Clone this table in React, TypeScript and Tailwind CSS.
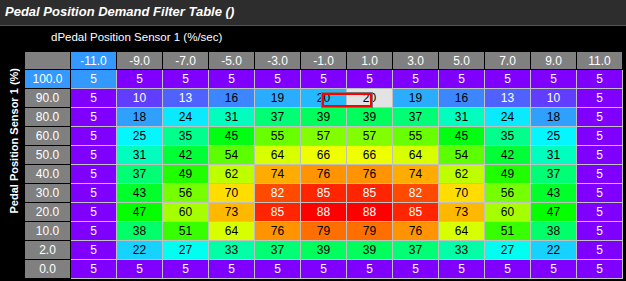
const cols = ["-11.0", "-9.0", "-7.0", "-5.0", "-3.0", "-1.0", "1.0", "3.0", "5.0", "7.0", "9.0", "11.0"];

const rows: { label: string; values: number[] }[] = [
  { label: "100.0", values: [5, 5, 5, 5, 5, 5, 5, 5, 5, 5, 5, 5] },
  { label: "90.0", values: [5, 10, 13, 16, 19, 20, 20, 19, 16, 13, 10, 5] },
  { label: "80.0", values: [5, 18, 24, 31, 37, 39, 39, 37, 31, 24, 18, 5] },
  { label: "60.0", values: [5, 25, 35, 45, 55, 57, 57, 55, 45, 35, 25, 5] },
  { label: "50.0", values: [5, 31, 42, 54, 64, 66, 66, 64, 54, 42, 31, 5] },
  { label: "40.0", values: [5, 37, 49, 62, 74, 76, 76, 74, 62, 49, 37, 5] },
  { label: "30.0", values: [5, 43, 56, 70, 82, 85, 85, 82, 70, 56, 43, 5] },
  { label: "20.0", values: [5, 47, 60, 73, 85, 88, 88, 85, 73, 60, 47, 5] },
  { label: "10.0", values: [5, 38, 51, 64, 76, 79, 79, 76, 64, 51, 38, 5] },
  { label: "2.0", values: [5, 22, 27, 33, 37, 39, 39, 37, 33, 27, 22, 5] },
  { label: "0.0", values: [5, 5, 5, 5, 5, 5, 5, 5, 5, 5, 5, 5] },
];

const MIN = 5;
const MAX = 88;

// purple -> cyan -> green -> yellow -> red
const stops = [
  [128, 0, 255],
  [0, 255, 255],
  [0, 255, 0],
  [255, 255, 0],
  [255, 0, 0],
];

const heat = (v: number) => {
  const t = (v - MIN) / (MAX - MIN);
  const seg = Math.min(3, Math.floor(t * 4));
  const f = t * 4 - seg;
  const a = stops[seg];
  const b = stops[seg + 1];
  const c = a.map((x, i) => Math.round(x + (b[i] - x) * f));
  return { bg: `rgb(${c[0]},${c[1]},${c[2]})`, light: t < 0.11 || t > 0.91 };
};

const HeaderCell = ({ text, active }: { text: string; active?: boolean }) => (
  <div
    className={`flex items-center justify-center border-r border-b border-black text-white ${
      active ? "bg-[#3399ff]" : "bg-[#808080]"
    }`}
  >
    {text}
  </div>
);

const App = () => {
  return (
    <div className="h-[281px] w-[626px] overflow-hidden bg-black font-['Liberation_Sans',Arial,sans-serif] text-[12px]">
      <div className="flex h-[26px] items-center border-b border-[#555555] bg-[#2d2d2d] px-[5px] pb-px">
        <h1 className="text-[13px] font-bold italic text-white">Pedal Position Demand Filter Table ()</h1>
      </div>

      <div className="flex">
        <div className="flex w-[25px] items-start justify-center pl-[3px] pt-[42px]">
          <span className="rotate-180 text-[11px] leading-[12px] font-bold text-white [writing-mode:vertical-rl]">
            Pedal Position Sensor 1 (%)
          </span>
        </div>

        <div className="flex flex-col">
          <div className="flex h-[26px] items-center pb-[3px] pl-[26px] text-[11.5px] text-white">
            dPedal Position Sensor 1 (%/sec)
          </div>

          <div className="relative grid grid-cols-[repeat(13,46px)] grid-rows-[18px_repeat(11,19px)]">
            <HeaderCell text="" />
            {cols.map((c, i) => (
              <HeaderCell key={c} text={c} active={i === 0} />
            ))}

            {rows.map((row, r) => (
              <div key={row.label} className="contents">
                <HeaderCell text={row.label} active={r === 0} />
                {row.values.map((v, c) => {
                  const focused = r === 0 && c === 0;
                  const selected = r === 1 && c === 6;
                  const { bg, light } = heat(v);
                  if (focused) {
                    return (
                      <div
                        key={c}
                        className="flex items-center justify-center border-r border-b border-[#c0c0c0] bg-[#3399ff] text-white outline-1 outline-offset-[-2px] outline-dotted outline-[#d27000]"
                      >
                        {v}
                      </div>
                    );
                  }
                  if (selected) {
                    return (
                      <div
                        key={c}
                        className="flex items-center justify-center border-r border-b border-[#c0c0c0] bg-[#e3e3e3] text-black"
                      >
                        {v}
                      </div>
                    );
                  }
                  return (
                    <div
                      key={c}
                      className={`flex items-center justify-center border-r border-b border-[#c0c0c0] ${
                        light ? "text-white" : "text-black"
                      }`}
                      style={{ backgroundColor: bg }}
                    >
                      {v}
                    </div>
                  );
                })}
              </div>
            ))}

            <div className="absolute top-[41px] left-[297px] h-[14px] w-[50px] border-2 border-[#ff0000] ring-1 ring-[#777777]" />
          </div>
        </div>
      </div>
    </div>
  );
};

export default App;
